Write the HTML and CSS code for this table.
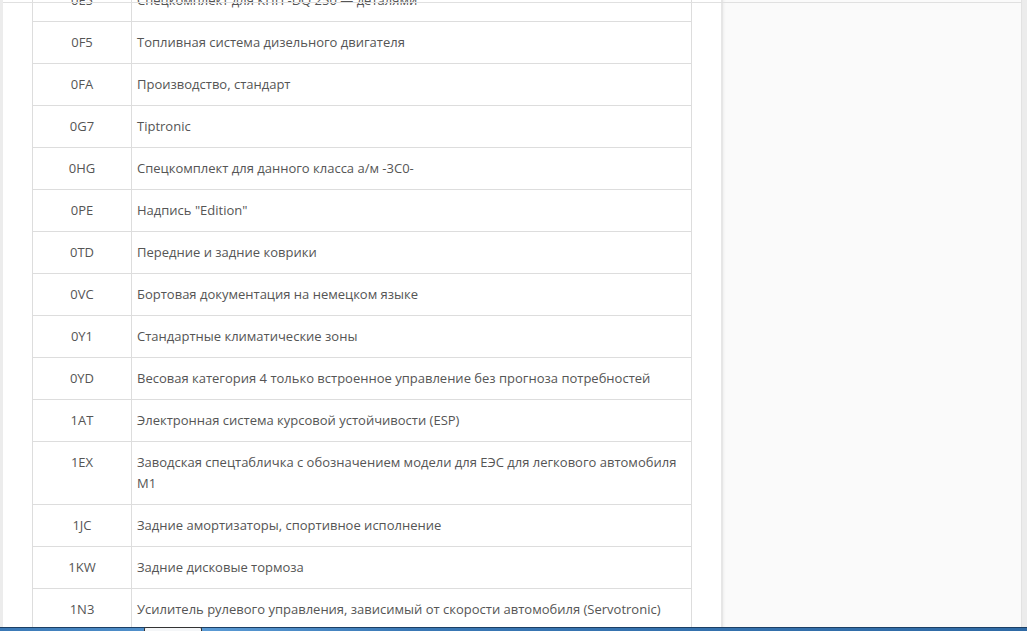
FILE: index.html
```html
<!DOCTYPE html>
<html lang="ru">
<head>
    <meta charset="UTF-8">
    <meta name="viewport" content="width=device-width, initial-scale=1.0">
    <title>Опции автомобиля</title>
    <link rel="stylesheet" href="styles.css">
</head>
<body>
    <div class="window">
        <div class="edge-left"></div>

        <!-- Options table (Left) -->
        <div class="content">
            <table class="options">
                <tr><td class="code">0E5</td><td>Спецкомплект для КПП -DQ 250 — деталями</td></tr>
                <tr><td class="code">0F5</td><td>Топливная система дизельного двигателя</td></tr>
                <tr><td class="code">0FA</td><td>Производство, стандарт</td></tr>
                <tr><td class="code">0G7</td><td>Tiptronic</td></tr>
                <tr><td class="code">0HG</td><td>Спецкомплект для данного класса а/м -3С0-</td></tr>
                <tr><td class="code">0PE</td><td>Надпись "Edition"</td></tr>
                <tr><td class="code">0TD</td><td>Передние и задние коврики</td></tr>
                <tr><td class="code">0VC</td><td>Бортовая документация на немецком языке</td></tr>
                <tr><td class="code">0Y1</td><td>Стандартные климатические зоны</td></tr>
                <tr><td class="code">0YD</td><td>Весовая категория 4 только встроенное управление без прогноза потребностей</td></tr>
                <tr><td class="code">1AT</td><td>Электронная система курсовой устойчивости (ESP)</td></tr>
                <tr><td class="code">1EX</td><td>Заводская спецтабличка с обозначением модели для ЕЭС для легкового автомобиля М1</td></tr>
                <tr><td class="code">1JC</td><td>Задние амортизаторы, спортивное исполнение</td></tr>
                <tr><td class="code">1KW</td><td>Задние дисковые тормоза</td></tr>
                <tr><td class="code">1N3</td><td>Усилитель рулевого управления, зависимый от скорости автомобиля (Servotronic)</td></tr>
            </table>
        </div>

        <!-- Sidebar (Right) -->
        <div class="sidebar"></div>

        <div class="edge-right"></div>
    </div>

    <!-- window chrome -->
    <div class="top-line"></div>
    <div class="taskbar"><span class="task"></span></div>
</body>
</html>
```

FILE: styles.css
```css
body {
    font-family: "Open Sans", "Liberation Sans", sans-serif;
    font-size: 13px;
    color: #555;
    background-color: #fff;
    margin: 0;
    padding: 0;
    overflow: hidden;
    height: 631px;
}
.window {
    display: grid;
    grid-template-columns: 3px 718px 300px 6px;
    height: 631px;
}
.edge-left,
.edge-right {
    background-color: #ececec;
}
.edge-right {
    border-left: 1px solid #e2e2e2;
}

/* Options table (Left) */
.content {
    padding-left: 29px;
    margin-top: -21px;
}
.options {
    border-collapse: collapse;
    width: 660px;
}
.options td {
    border: 1px solid #ddd;
    padding: 10px 5px;
    line-height: 21px;
    vertical-align: top;
}
.options td.code {
    width: 88px;
    text-align: center;
}

/* Sidebar (Right) */
.sidebar {
    background-color: #fafafa;
    border-left: 2px solid #e6e6e6;
    box-shadow: inset 3px 0 3px -2px rgba(0, 0, 0, 0.05);
}

.top-line {
    position: fixed;
    top: 2px;
    left: 3px;
    right: 6px;
    height: 1px;
    background-color: #e0e0e0;
}
.taskbar {
    position: fixed;
    left: 0;
    right: 0;
    bottom: 0;
    height: 3px;
    border-top: 1px solid #1c3f64;
    background: linear-gradient(to right, #3a78b5, #5b9bd5 20%, #3a78b5 40%, #2f6aa5);
}
.task {
    position: absolute;
    left: 144px;
    top: -1px;
    width: 58px;
    height: 4px;
    border: 1px solid #333;
    border-bottom: none;
    border-radius: 2px 2px 0 0;
    background-color: #f4f6f8;
    box-sizing: border-box;
}
```
